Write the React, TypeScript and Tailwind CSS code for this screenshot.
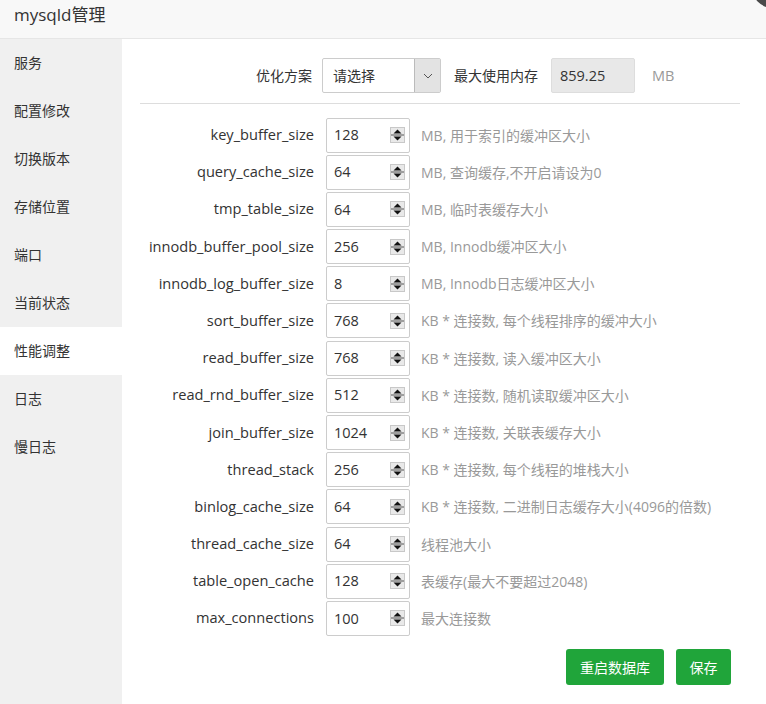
import React from 'react';

type Param = {
    name: string;
    value: string;
    note: string;
};

const menu = ['服务', '配置修改', '切换版本', '存储位置', '端口', '当前状态', '性能调整', '日志', '慢日志'];

const params: Param[] = [
    { name: 'key_buffer_size', value: '128', note: 'MB, 用于索引的缓冲区大小' },
    { name: 'query_cache_size', value: '64', note: 'MB, 查询缓存,不开启请设为0' },
    { name: 'tmp_table_size', value: '64', note: 'MB, 临时表缓存大小' },
    { name: 'innodb_buffer_pool_size', value: '256', note: 'MB, Innodb缓冲区大小' },
    { name: 'innodb_log_buffer_size', value: '8', note: 'MB, Innodb日志缓冲区大小' },
    { name: 'sort_buffer_size', value: '768', note: 'KB * 连接数, 每个线程排序的缓冲大小' },
    { name: 'read_buffer_size', value: '768', note: 'KB * 连接数, 读入缓冲区大小' },
    { name: 'read_rnd_buffer_size', value: '512', note: 'KB * 连接数, 随机读取缓冲区大小' },
    { name: 'join_buffer_size', value: '1024', note: 'KB * 连接数, 关联表缓存大小' },
    { name: 'thread_stack', value: '256', note: 'KB * 连接数, 每个线程的堆栈大小' },
    { name: 'binlog_cache_size', value: '64', note: 'KB * 连接数, 二进制日志缓存大小(4096的倍数)' },
    { name: 'thread_cache_size', value: '64', note: '线程池大小' },
    { name: 'table_open_cache', value: '128', note: '表缓存(最大不要超过2048)' },
    { name: 'max_connections', value: '100', note: '最大连接数' },
];

function Spinner() {
    return (
        <svg width="15" height="16" viewBox="0 0 15 16" className="shrink-0">
            <rect x="0.5" y="0.5" width="14" height="15" fill="#e9e9e9" stroke="#c8c8c8" />
            <line x1="1" y1="8" x2="14" y2="8" fill="none" stroke="#555" strokeWidth="1" />
            <path d="M7.5 2.5 L11.5 6.5 L3.5 6.5 Z" fill="#111" />
            <path d="M3.5 9.5 L11.5 9.5 L7.5 13.5 Z" fill="#111" />
        </svg>
    );
}

export default function App() {
    return (
        <div
            className="relative h-[704px] w-[766px] overflow-hidden bg-white text-[#333]"
            style={{ fontFamily: '"Open Sans", "Noto Sans CJK SC", sans-serif' }}
        >
            <div className="h-[39px] border-b border-[#e6e6e6] bg-[#f8f8f8] pl-[14px] text-[17px] leading-[30px] text-[#333]">
                mysqld管理
            </div>
            <div className="absolute left-[750px] top-[-43px] h-[52px] w-[52px] rounded-full bg-[#4a4a4a]" />

            <div className="flex h-[665px]">
                <div className="w-[122px] shrink-0 bg-[#f0f0f0]">
                    {menu.map((item) => (
                        <div
                            key={item}
                            className={
                                item === '性能调整'
                                    ? 'h-[48px] bg-white pl-[14px] text-[14px] leading-[48px]'
                                    : 'h-[48px] pl-[14px] text-[14px] leading-[48px]'
                            }
                        >
                            {item}
                        </div>
                    ))}
                </div>

                <div className="flex-1 pl-[18px] pt-[19px]">
                    <div className="flex h-[35px] items-center text-[14px]">
                        <div className="w-[182px] pr-[10px] text-right">优化方案</div>
                        <div className="flex h-[35px] w-[119px] rounded-[2px] border border-[#ccc] bg-white">
                            <div className="flex-1 pl-[10px] leading-[33px]">请选择</div>
                            <div className="flex w-[26px] items-center justify-center border-l border-[#bbb] bg-[#e3e3e3]">
                                <svg width="10" height="6" viewBox="0 0 10 6">
                                    <path d="M1 1 L5 5 L9 1" fill="none" stroke="#555" strokeWidth="1" />
                                </svg>
                            </div>
                        </div>
                        <div className="ml-[13px]">最大使用内存</div>
                        <div className="ml-[13px] h-[35px] w-[84px] rounded-[2px] border border-[#ddd] bg-[#e8e8e8] pl-[8px] text-[14.5px] leading-[33px]">
                            859.25
                        </div>
                        <div className="ml-[17px] text-[14.5px] text-[#999]">MB</div>
                    </div>

                    <div className="mt-[10px] w-[600px] border-t border-[#ddd]" />

                    <div className="mt-[14px] flex flex-col gap-[3.2px]">
                        {params.map((p) => (
                            <div key={p.name} className="flex h-[34px] items-center text-[14px]">
                                <div className="w-[186px] pr-[12px] text-right text-[14.6px]">{p.name}</div>
                                <div className="flex h-[35px] w-[84px] items-center rounded-[2px] border border-[#ccc] pl-[7px] pr-[4px] text-[14.5px]">
                                    <div className="flex-1">{p.value}</div>
                                    <Spinner />
                                </div>
                                <div className="ml-[11px] text-[#999]">{p.note}</div>
                            </div>
                        ))}
                    </div>

                    <div className="mt-[14px] flex w-[591px] justify-end gap-[12px] text-[14px]">
                        <button className="h-[36px] w-[98px] rounded-[3px] bg-[#20a53a] text-white">重启数据库</button>
                        <button className="h-[36px] w-[55px] rounded-[3px] bg-[#20a53a] text-white">保存</button>
                    </div>
                </div>
            </div>
        </div>
    );
}
